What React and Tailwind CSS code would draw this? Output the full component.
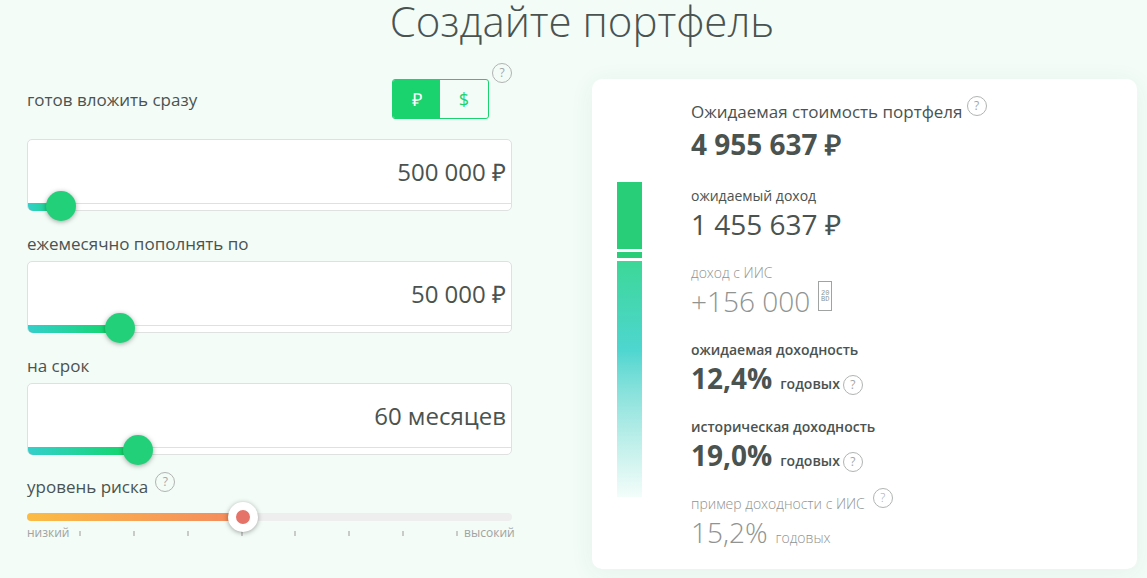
import React, { useState } from 'react'

const formatNumber = (number) => String(number).replace(/\B(?=(\d{3})+$)/g, ' ');

const fields = [
    { id: 'start', label: 'готов вложить сразу', unit: null, min: 0, max: 7200000, step: 10000, initial: 500000 },
    { id: 'monthly', label: 'ежемесячно пополнять по', unit: null, min: 0, max: 260000, step: 1000, initial: 50000 },
    { id: 'term', label: 'на срок', unit: 'месяцев', min: 12, max: 222, step: 1, initial: 60 },
];

function Hint({ label, className = '' }) {
    return (
        <button type="button" aria-label={label} className={`h-5 w-5 shrink-0 cursor-pointer rounded-full border border-[#b0b4b2] text-center text-xs leading-[18px] text-[#a3a6a5] ${className}`}>?</button>
    )
}

function CurrencyToggle({ currency, setCurrency }) {
    const active = 'bg-[#1ad36f] text-white';
    const inactive = 'text-[#1ad36f]';

    return (
        <div className="flex h-10 w-[97px] overflow-hidden rounded-[3px] border border-[#1ad36f] text-lg">
            <button type="button" aria-pressed={currency === '₽'} onClick={() => setCurrency('₽')} className={`w-[47px] cursor-pointer ${currency === '₽' ? active : inactive}`}>₽</button>
            <button type="button" aria-pressed={currency === '$'} onClick={() => setCurrency('$')} className={`flex-1 cursor-pointer ${currency === '$' ? active : inactive}`}>$</button>
        </div>
    )
}

function AmountField({ field, currency }) {
    const [value, setValue] = useState(field.initial);
    const percent = (value - field.min) / (field.max - field.min) * 100;

    const changeText = (event) => {
        const number = Number(event.target.value.replace(/\D/g, ''));
        setValue(Math.min(number, field.max))
    }

    return (
        <div className="relative h-[72px] rounded-[5px] border border-[#dfe1e0] bg-white">
            <input id={field.id} type="text" value={`${formatNumber(value)} ${field.unit || currency}`} onChange={changeText} className="block h-16 w-full border-b border-[#dfe1e0] pr-[5px] text-right text-2xl outline-none" />
            <div className="absolute -bottom-px left-0 h-2 rounded-bl-[5px] bg-linear-to-r from-[#34cfcb] to-[#10d658]" style={{ width: `${Math.max(percent, 0)}%` }}></div>
            <input
                type="range"
                aria-label={field.label}
                min={field.min}
                max={field.max}
                step={field.step}
                value={value}
                onChange={(event) => setValue(Number(event.target.value))}
                className="absolute -right-4 -bottom-[11px] -left-4 h-[30px] cursor-pointer appearance-none bg-transparent outline-none [&::-webkit-slider-thumb]:h-[30px] [&::-webkit-slider-thumb]:w-[30px] [&::-webkit-slider-thumb]:appearance-none [&::-webkit-slider-thumb]:rounded-full [&::-webkit-slider-thumb]:bg-[#22d07a] [&::-webkit-slider-thumb]:shadow-[0_1px_5px_rgba(0,0,0,0.35)]"
            />
        </div>
    )
}

function RiskSlider() {
    const [risk, setRisk] = useState(4);

    return (
        <div>
            <div className="flex items-start gap-[7px] pt-[17px]">
                <label htmlFor="risk" className="mt-[3px] text-[17px] leading-6">уровень риска</label>
                <Hint label="Что такое уровень риска" />
            </div>
            <div className="relative z-10 flex h-9 items-center">
                <div className="h-2 w-full overflow-hidden rounded-full bg-[#eeeeee]">
                    <div className="h-full bg-linear-to-r from-[#fbbc43] to-[#f4895d]" style={{ width: `${risk / 9 * 100}%` }}></div>
                </div>
                <input
                    id="risk"
                    type="range"
                    min="0"
                    max="9"
                    value={risk}
                    onChange={(event) => setRisk(Number(event.target.value))}
                    className="absolute -right-4 -left-[15px] h-[30px] cursor-pointer appearance-none bg-transparent outline-none [&::-webkit-slider-thumb]:h-[30px] [&::-webkit-slider-thumb]:w-[30px] [&::-webkit-slider-thumb]:appearance-none [&::-webkit-slider-thumb]:rounded-full [&::-webkit-slider-thumb]:border-8 [&::-webkit-slider-thumb]:border-white [&::-webkit-slider-thumb]:bg-[#e57368] [&::-webkit-slider-thumb]:shadow-[0_1px_5px_rgba(0,0,0,0.35)]"
                />
            </div>
            <div className="-mt-[10px] grid grid-cols-9 text-xs leading-4 text-[#a0a3a2]">
                {Array.from({ length: 9 }, (_, index) => (
                    <div key={index} className="flex min-w-0 items-center justify-between whitespace-nowrap">
                        <span>{index === 0 && 'низкий'}</span>
                        {index < 8 ? <i className="h-[5px] w-[2px] bg-[#c9cbca]"></i> : <span className="w-full pl-[6px]">высокий</span>}
                    </div>
                ))}
            </div>
        </div>
    )
}

function Result({ label, value, suffix, hint, labelHint, className = '', labelClass = '', valueClass = '' }) {
    return (
        <div className={`mb-[21px] last:mb-0 ${className}`}>
            <dt className={`flex h-5 gap-2 text-sm leading-5 ${labelClass}`}>
                {label}
                {labelHint && <Hint label={labelHint} className="-mt-[6px]" />}
            </dt>
            <dd className={`flex h-9 items-baseline text-[28px] leading-9 ${valueClass}`}>
                {value}
                {suffix && <span className="ml-2 text-sm">{suffix}</span>}
                {hint && <Hint label={hint} className="ml-[3px] font-normal" />}
            </dd>
        </div>
    )
}

function App() {
    const [currency, setCurrency] = useState('₽');

    return (
        <div className="min-h-screen bg-[#f3fcf7] pr-[10px] pb-2 pl-[27px] font-['Open_Sans',sans-serif] text-[#4a5350]">
            <h1 className="h-[63px] text-center text-[42px] leading-[42px] font-light">Создайте портфель</h1>

            <main className="grid grid-cols-[485fr_545fr] gap-20">
                <form onSubmit={(event) => event.preventDefault()}>
                    <div className="mb-5 flex h-14 items-end">
                        <label htmlFor="start" className="flex-1 text-[17px] leading-[38px]">{fields[0].label}</label>
                        <CurrencyToggle currency={currency} setCurrency={setCurrency} />
                        <Hint label="О валюте портфеля" className="ml-[3px] self-start" />
                    </div>
                    <AmountField field={fields[0]} currency={currency} />
                    {fields.slice(1).map(field => (
                        <div key={field.id}>
                            <label htmlFor={field.id} className="block pt-[21px] pb-[5px] text-[17px] leading-6">{field.label}</label>
                            <AmountField field={field} currency={currency} />
                        </div>
                    ))}
                    <RiskSlider />
                </form>

                <section className="mt-4 flex gap-[49px] self-start rounded-[10px] bg-white py-[19px] pl-[25px] shadow-[0_4px_24px_rgba(60,120,90,0.07)]">
                    <div className="mt-21 flex w-[25px] flex-col gap-[3px]">
                        <div className="h-[67px] bg-[#28cf78]"></div>
                        <div className="h-[6px] bg-[#28cf78]"></div>
                        <div className="h-[236px] bg-linear-to-b from-[#3dd797] via-[#4ed6d0] via-38% to-[#f3fdfa]"></div>
                    </div>
                    <dl>
                        <div className="mb-6">
                            <dt className="flex h-7 gap-1 text-[17px] leading-7">
                                Ожидаемая стоимость портфеля
                                <Hint label="О стоимости портфеля" className="-mt-[2px]" />
                            </dt>
                            <dd className="text-[28px] leading-9 font-bold">4 955 637 {currency}</dd>
                        </div>
                        <Result label="ожидаемый доход" value={`1 455 637 ${currency}`} />
                        <Result
                            label="доход с ИИС"
                            value={
                                <>
                                    +156 000
                                    <span className="-mt-[2px] ml-2 flex h-[30px] w-[14px] flex-col items-center justify-center self-start border border-[#a0a3a2] font-['Liberation_Mono',monospace] text-[7px] leading-[6px]">
                                        <span>20</span>
                                        <span>BD</span>
                                    </span>
                                </>
                            }
                            className="font-light text-[#8f9391]"
                        />
                        <Result label="ожидаемая доходность" value="12,4%" suffix="годовых" hint="Об ожидаемой доходности" labelClass="font-semibold" valueClass="font-bold [&>span]:font-semibold" />
                        <Result label="историческая доходность" value="19,0%" suffix="годовых" hint="Об исторической доходности" labelClass="font-semibold" valueClass="font-bold [&>span]:font-semibold" />
                        <Result label="пример доходности с ИИС" labelHint="О доходности с ИИС" value="15,2%" suffix="годовых" className="font-light text-[#8f9391]" />
                    </dl>
                </section>
            </main>
        </div>
    )
}

export default App
